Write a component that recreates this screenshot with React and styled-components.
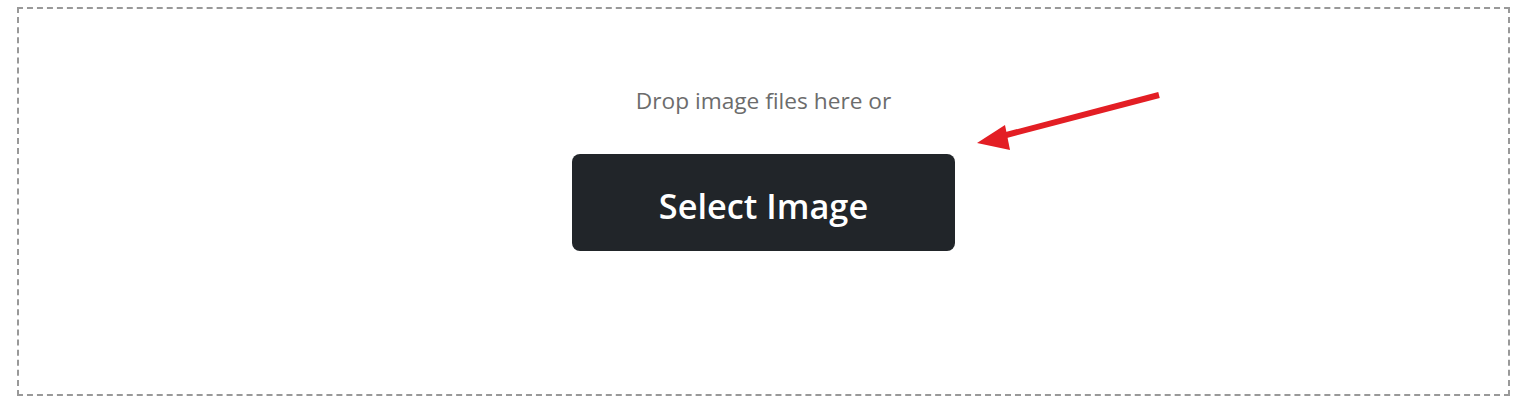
import styled, { createGlobalStyle } from "styled-components";

const GlobalStyle = createGlobalStyle`
    body {
        margin: 0;
        background: #ffffff;
        font-family: "Open Sans", "Noto Sans", sans-serif;
    }
`;

const Page = styled.div`
    padding: 7px 24px 0 17px;
`;

const DropZone = styled.div`
    position: relative;
    box-sizing: border-box;
    height: 389px;
    border: 2px dashed #999999;
    display: flex;
    flex-direction: column;
    align-items: center;
    padding-top: 77px;
`;

const DropText = styled.p`
    margin: 0;
    font-size: 22.7px;
    line-height: 30px;
    color: #6c6c6c;
`;

const SelectButton = styled.button`
    margin-top: 38px;
    width: 383px;
    height: 97px;
    padding-top: 6px;
    border: none;
    border-radius: 8px;
    background: #212529;
    color: #ffffff;
    font-family: "Open Sans", "Noto Sans", sans-serif;
    font-size: 34.3px;
    font-weight: 600;
    cursor: pointer;
`;

const Arrow = styled.svg`
    position: absolute;
    left: 936px;
    top: 72px;
`;

function App() {
    return (
        <Page>
            <GlobalStyle />
            <DropZone>
                <DropText>Drop image files here or</DropText>
                <SelectButton>Select Image</SelectButton>
                <Arrow width="210" height="80" viewBox="0 0 210 80">
                    <line x1="204" y1="14" x2="40" y2="57" stroke="#e31e24" strokeWidth="6" />
                    <polygon points="22,62 50,44 55,69" fill="#e31e24" />
                </Arrow>
            </DropZone>
        </Page>
    );
}

export default App;
